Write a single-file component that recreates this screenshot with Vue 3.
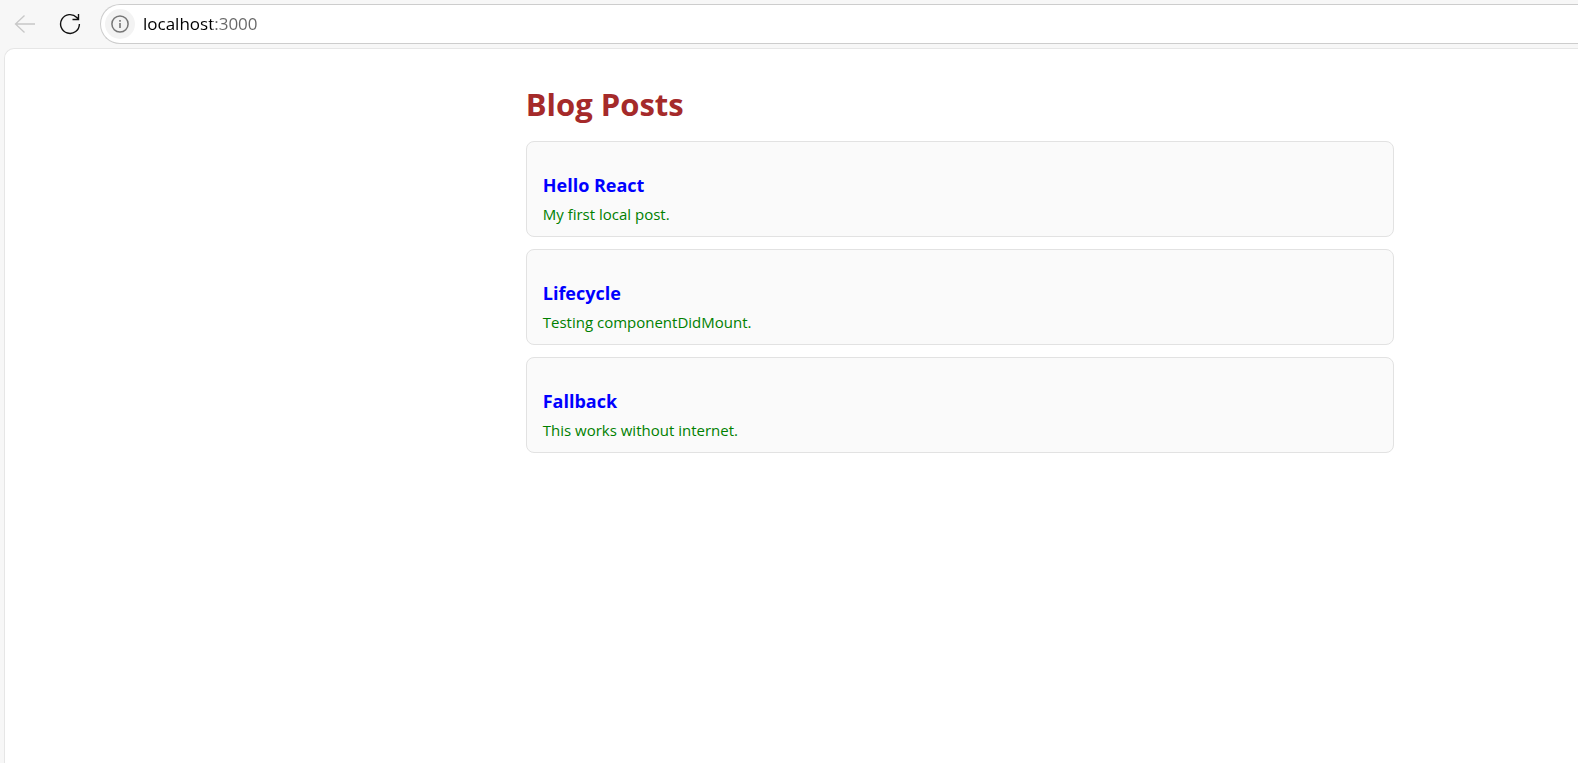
<script setup>
import { ref } from 'vue'

const address = ref('localhost:3000')
const posts = [
  { title: 'Hello React', body: 'My first local post.' },
  { title: 'Lifecycle', body: 'Testing componentDidMount.' },
  { title: 'Fallback', body: 'This works without internet.' },
]
</script>

<template>
  <div class="browser">
    <header class="toolbar">
      <button class="tool" type="button" aria-label="Back" disabled>
        <svg width="22" height="20" viewBox="0 0 22 20" fill="none" stroke="#c8c8c8" stroke-width="1.3">
          <path d="M21 10H1.5M10.5 1.5L1.5 10l9 8.5" />
        </svg>
      </button>
      <button class="tool" type="button" aria-label="Refresh">
        <svg width="22" height="22" viewBox="0 0 22 22" fill="none" stroke="#111" stroke-width="1.4">
          <path d="M20.4 11A9.4 9.4 0 1 1 17.8 4.5L19.4 6.2M19.5 1v5.5h-6" />
        </svg>
      </button>
      <div class="address">
        <button class="info" type="button" aria-label="Site information">
          <svg width="18" height="18" viewBox="0 0 18 18" fill="none" stroke="#767676" stroke-width="1.5">
            <circle cx="9" cy="9" r="8.1" />
            <path d="M9 8v5M9 5v1.7" stroke-width="1.6" />
          </svg>
        </button>
        <input v-model="address" class="url" type="text" aria-label="Address" spellcheck="false" />
      </div>
    </header>
    <main class="page">
      <section class="blog">
        <h1>Blog Posts</h1>
        <article v-for="post in posts" :key="post.title" class="post">
          <h3>{{ post.title }}</h3>
          <p>{{ post.body }}</p>
        </article>
      </section>
    </main>
  </div>
</template>

<style>
body {
  margin: 0;
}
</style>

<style scoped>
.browser {
  display: flex;
  flex-direction: column;
  min-height: 100vh;
  background: #f7f7f7;
  font-family: "Segoe UI", "Open Sans", "Noto Sans", sans-serif;
  overflow: hidden;
}

.toolbar {
  display: flex;
  align-items: center;
  padding: 4px 0 4px 2px;
}

.tool {
  display: flex;
  align-items: center;
  justify-content: center;
  width: 45px;
  height: 40px;
  padding: 0;
  border: 0;
  background: none;
}

.address {
  display: flex;
  flex: 1;
  align-items: center;
  gap: 8px;
  box-sizing: border-box;
  height: 40px;
  margin-left: 8px;
  padding-left: 4px;
  border: 1px solid #cdcdcd;
  border-right: 0;
  border-radius: 20px 0 0 20px;
  background: #fff;
}

.info {
  display: flex;
  align-items: center;
  justify-content: center;
  width: 30px;
  height: 30px;
  padding: 0;
  border: 0;
  border-radius: 50%;
  background: #f3f3f3;
}

.url {
  flex: 1;
  min-width: 0;
  height: 30px;
  padding: 0 0 2px;
  box-sizing: border-box;
  border: 0;
  outline: 0;
  /* Host in black, port in grey */
  background: linear-gradient(90deg, #000 69px, #666 69px);
  background-clip: text;
  color: transparent;
  caret-color: #000;
  font-family: inherit;
  font-size: 17px;
}

.page {
  display: grid;
  flex: 1;
  grid-template-columns: 520fr minmax(0, 868px) 184fr;
  align-items: start;
  margin-left: 4px;
  border: 1px solid #e6e6e6;
  border-width: 1px 0 0 1px;
  border-top-left-radius: 10px;
  background: #fff;
}

.blog {
  grid-column: 2;
  padding: 31px 0;
}

h1 {
  margin: 0 0 13px;
  color: brown;
  font-size: 31px;
  line-height: 48px;
}

.post {
  box-sizing: border-box;
  margin-bottom: 12px;
  padding: 30px 16px 10px;
  border: 1px solid #e2e2e2;
  border-radius: 8px;
  background: #fafafa;
}

h3 {
  margin: 0 0 4px;
  color: blue;
  font-size: 18px;
  line-height: 26px;
}

p {
  margin: 0;
  color: green;
  font-size: 15px;
  line-height: 24px;
}
</style>
